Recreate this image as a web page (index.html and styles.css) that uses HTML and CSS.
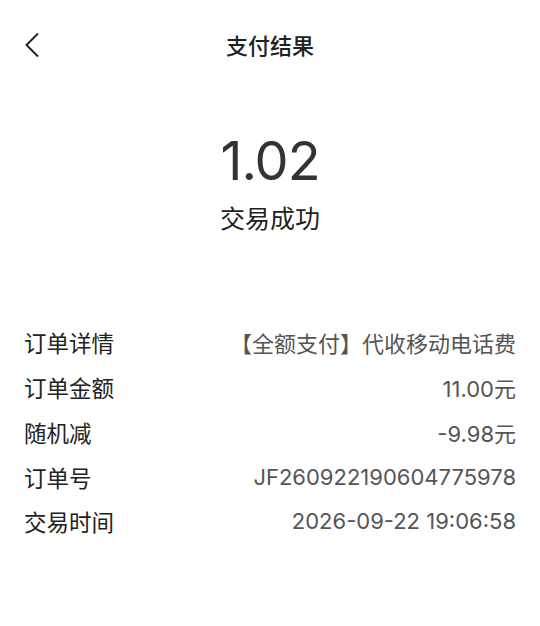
FILE: index.html
```html
<!DOCTYPE html>
<html lang="zh-CN">
<head>
<meta charset="utf-8">
<title>支付结果</title>
<link rel="stylesheet" href="styles.css">
</head>
<body>
<div class="page">
  <header class="nav">
    <span class="back">
      <svg width="16" height="26" viewBox="0 0 16 26"><path d="M14 1.5 L2.5 13 L14 24.5" fill="none" stroke="#222" stroke-width="2"/></svg>
    </span>
    <h1 class="title">支付结果</h1>
  </header>
  <section class="summary">
    <div class="amount">1.02</div>
    <div class="status">交易成功</div>
  </section>
  <section class="details">
    <div class="row"><span class="label">订单详情</span><span class="value">【全额支付】代收移动电话费</span></div>
    <div class="row"><span class="label">订单金额</span><span class="value">11.00元</span></div>
    <div class="row"><span class="label">随机减</span><span class="value">-9.98元</span></div>
    <div class="row"><span class="label">订单号</span><span class="value">JF260922190604775978</span></div>
    <div class="row"><span class="label">交易时间</span><span class="value">2026-09-22 19:06:58</span></div>
  </section>
</div>
</body>
</html>
```

FILE: styles.css
```css
html, body {
  margin: 0;
  padding: 0;
  background: #fff;
}
body {
  font-family: "Inter", "Noto Sans CJK SC", sans-serif;
  color: #222;
}
.page {
  width: 540px;
  height: 626px;
  overflow: hidden;
}
.nav {
  position: relative;
  height: 88px;
  display: flex;
  align-items: center;
  justify-content: center;
}
.back {
  position: absolute;
  left: 24px;
  top: 32px;
  width: 16px;
  height: 26px;
  display: flex;
}
.title {
  margin: 0;
  font-size: 22px;
  font-weight: 500;
  color: #222;
  font-family: "Noto Sans CJK SC", sans-serif;
}
.summary {
  display: flex;
  flex-direction: column;
  align-items: center;
  padding-top: 40px;
}
.amount {
  font-size: 54px;
  line-height: 66px;
  color: #333;
  font-weight: 400;
  letter-spacing: -1px;
}
.status {
  margin-top: 6px;
  font-size: 25px;
  line-height: 34px;
  color: #222;
  font-family: "Noto Sans CJK SC", sans-serif;
}
.details {
  padding: 86px 24px 0;
  display: flex;
  flex-direction: column;
}
.row {
  display: flex;
  justify-content: space-between;
  align-items: center;
  height: 44.75px;
  font-size: 22px;
}
.label {
  color: #222;
  font-size: 22.5px;
  font-family: "Noto Sans CJK SC", sans-serif;
}
.value {
  color: #555;
}
```
